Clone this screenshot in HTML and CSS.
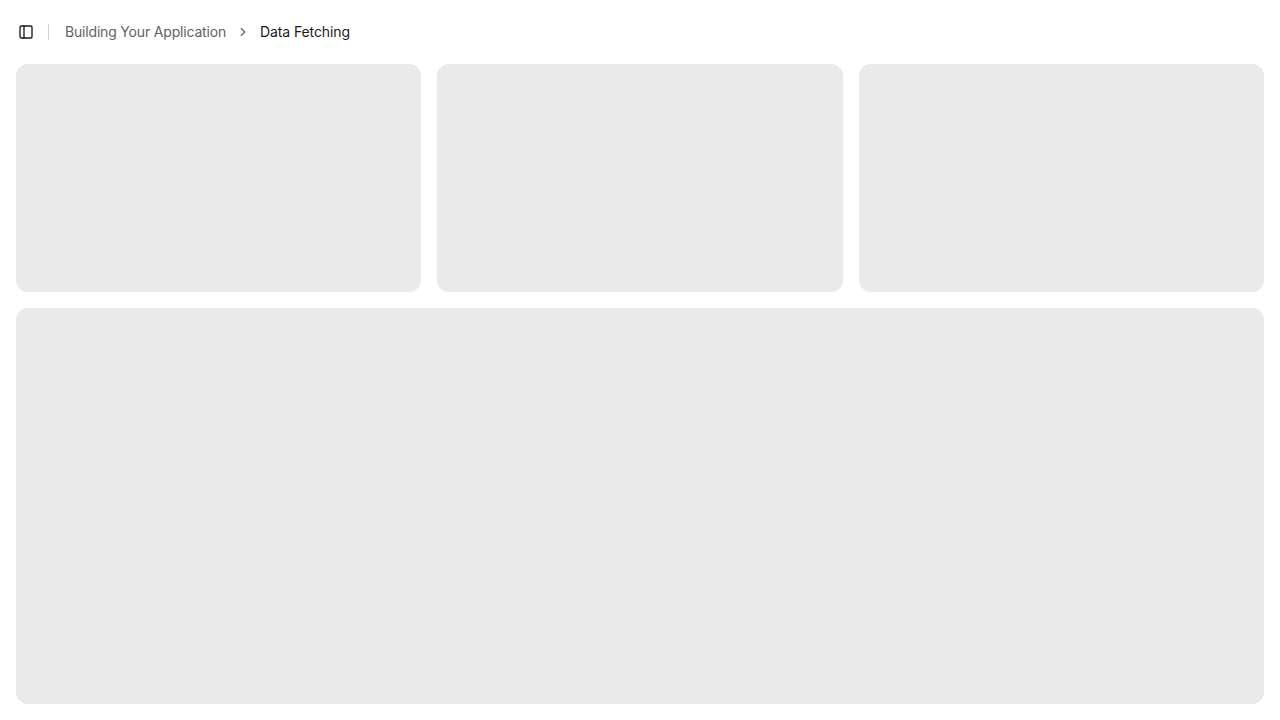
FILE: index.html
```html
<!DOCTYPE html>
<html lang="en">
<head>
<meta charset="utf-8">
<title>Data Fetching</title>
<link rel="stylesheet" href="styles.css">
</head>
<body>
<main class="page">
  <header class="header">
    <button class="trigger" aria-label="Toggle Sidebar">
      <svg width="16" height="16" viewBox="0 0 24 24" fill="none" stroke="currentColor" stroke-width="2" stroke-linecap="round" stroke-linejoin="round"><rect width="18" height="18" x="3" y="3" rx="2"/><path d="M9 3v18"/></svg>
    </button>
    <div class="separator"></div>
    <nav aria-label="breadcrumb">
      <ol class="breadcrumb">
        <li><a class="crumb-link">Building Your Application</a></li>
        <li class="chevron" aria-hidden="true"><svg width="14" height="14" viewBox="0 0 24 24" fill="none" stroke="currentColor" stroke-width="2" stroke-linecap="round" stroke-linejoin="round"><path d="m9 18 6-6-6-6"/></svg></li>
        <li><span class="crumb-page">Data Fetching</span></li>
      </ol>
    </nav>
  </header>
  <div class="content">
    <div class="cards">
      <div class="panel card"></div>
      <div class="panel card"></div>
      <div class="panel card"></div>
    </div>
    <div class="panel main-panel"></div>
  </div>
</main>
</body>
</html>
```
FILE: styles.css
```css
* { box-sizing: border-box; margin: 0; padding: 0; }
body { font-family: Inter, sans-serif; background: #fff; color: #1a1a1a; }
.page { display: flex; flex-direction: column; height: 100vh; }
.header { display: flex; align-items: center; height: 64px; padding: 0 16px; flex-shrink: 0; }
.trigger { display: flex; align-items: center; justify-content: center; width: 28px; height: 28px; margin-left: -4px; border: 0; background: transparent; color: inherit; }
.separator { width: 1px; height: 16px; margin: 0 16px 0 8px; background: #d0d0d0; }
.breadcrumb { display: flex; align-items: center; gap: 10px; list-style: none; font-size: 14px; line-height: 20px; color: #636363; }
.breadcrumb li { display: inline-flex; align-items: center; }
.crumb-link { letter-spacing: -0.18px; }
.crumb-page { color: #1a1a1a; letter-spacing: -0.1px; }
.content { display: flex; flex: 1; flex-direction: column; gap: 16px; padding: 0 16px 16px; }
.cards { display: grid; grid-template-columns: repeat(3, minmax(0, 1fr)); gap: 16px; }
.panel { border-radius: 12px; background: #eaeaea; }
.card { aspect-ratio: 16 / 9; }
.main-panel { flex: 1; }
```
